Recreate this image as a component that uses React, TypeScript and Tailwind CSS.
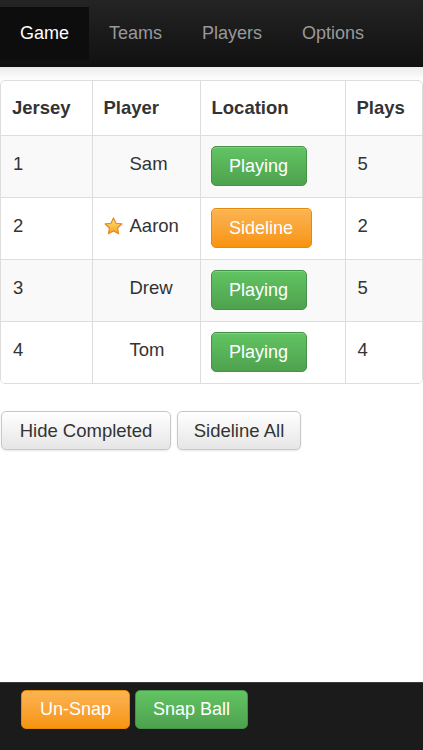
import React from 'react';

const font = { fontFamily: '"Liberation Sans", Arial, sans-serif' };

const tabs = ['Game', 'Teams', 'Players', 'Options'];

type Row = { jersey: number; name: string; star?: boolean; playing: boolean; plays: number };

const rows: Row[] = [
  { jersey: 1, name: 'Sam', playing: true, plays: 5 },
  { jersey: 2, name: 'Aaron', star: true, playing: false, plays: 2 },
  { jersey: 3, name: 'Drew', playing: true, plays: 5 },
  { jersey: 4, name: 'Tom', playing: true, plays: 4 },
];

const Star = () => (
  <svg width="21" height="21" viewBox="0 0 24 24">
    <defs>
      <linearGradient id="sg" x1="0" y1="0" x2="0" y2="1">
        <stop offset="0" stopColor="#ffe27a" />
        <stop offset="1" stopColor="#f7a21b" />
      </linearGradient>
    </defs>
    <path
      d="M12 2.2l2.9 6.1 6.6.8-4.9 4.6 1.3 6.6L12 17l-5.9 3.3 1.3-6.6-4.9-4.6 6.6-.8z"
      fill="url(#sg)"
      stroke="#e8892a"
      strokeWidth="1.4"
      strokeLinejoin="round"
    />
  </svg>
);

const green = 'bg-gradient-to-b from-[#62c462] to-[#4ea24e] border border-[#45924a] text-white';
const orange = 'bg-gradient-to-b from-[#fbb450] to-[#f89406] border border-[#e38a0c] text-white';
const plain = 'bg-gradient-to-b from-white to-[#e6e6e6] border border-[#c8c8c8] text-[#333]';

export default function App() {
  return (
    <div className="min-h-[750px] flex flex-col bg-white text-[#333]" style={font}>
      <nav className="h-[67px] bg-gradient-to-b from-[#242424] to-[#111] flex items-center">
        {tabs.map((t, i) => (
          <div
            key={t}
            className={`h-[53px] flex items-center px-5 text-[18px] ${i === 0 ? 'bg-[#0d0d0d] text-white' : 'text-[#999]'}`}
          >
            {t}
          </div>
        ))}
      </nav>
      <div className="h-[13px] bg-gradient-to-b from-[#ececec] to-white" />

      <main className="flex-1">
        <div className="border border-[#ddd] rounded-[5px] overflow-hidden">
          <table className="w-full border-collapse text-[18.5px]">
            <colgroup>
              <col className="w-[91px]" />
              <col className="w-[108px]" />
              <col className="w-[145px]" />
              <col />
            </colgroup>
            <thead>
              <tr className="h-[54px] text-left">
                <th className="px-[11px] font-bold border-r border-[#ddd]">Jersey</th>
                <th className="px-[11px] font-bold border-r border-[#ddd]">Player</th>
                <th className="px-[11px] font-bold border-r border-[#ddd]">Location</th>
                <th className="px-[11px] font-bold">Plays</th>
              </tr>
            </thead>
            <tbody>
              {rows.map((r, i) => (
                <tr key={r.jersey} className={`h-[62px] border-t border-[#ddd] ${i % 2 === 0 ? 'bg-[#f9f9f9]' : 'bg-white'}`}>
                  <td className="px-3 pb-1 border-r border-[#ddd]">{r.jersey}</td>
                  <td className="px-[10px] pb-1 border-r border-[#ddd]">
                    <div className="flex items-center gap-[6px]">
                      <span className="w-[21px] h-[21px] flex items-center">{r.star && <Star />}</span>
                      <span>{r.name}</span>
                    </div>
                  </td>
                  <td className="px-[10px] border-r border-[#ddd]">
                    <button
                      className={`h-[40px] rounded-[5px] text-[18px] shadow-[inset_0_1px_0_rgba(255,255,255,0.2)] ${r.playing ? `${green} w-[96px]` : `${orange} w-[101px]`}`}
                    >
                      {r.playing ? 'Playing' : 'Sideline'}
                    </button>
                  </td>
                  <td className="px-3 pb-1">{r.plays}</td>
                </tr>
              ))}
            </tbody>
          </table>
        </div>

        <div className="flex gap-[6px] mt-[27px] pl-[1px]">
          <button className={`${plain} h-[39px] w-[170px] rounded-[5px] text-[18.5px] shadow-[0_1px_2px_rgba(0,0,0,0.1)]`}>Hide Completed</button>
          <button className={`${plain} h-[39px] w-[124px] rounded-[5px] text-[18.5px] shadow-[0_1px_2px_rgba(0,0,0,0.1)]`}>Sideline All</button>
        </div>
      </main>

      <footer className="h-[68px] bg-[#1b1b1b] border-t border-[#3a3a3a] flex items-start pt-[7px] pl-[21px] gap-[5px]">
        <button className={`${orange} h-[39px] w-[109px] rounded-[5px] text-[18px]`}>Un-Snap</button>
        <button className={`${green} h-[39px] w-[113px] rounded-[5px] text-[18px]`}>Snap Ball</button>
      </footer>
    </div>
  );
}
